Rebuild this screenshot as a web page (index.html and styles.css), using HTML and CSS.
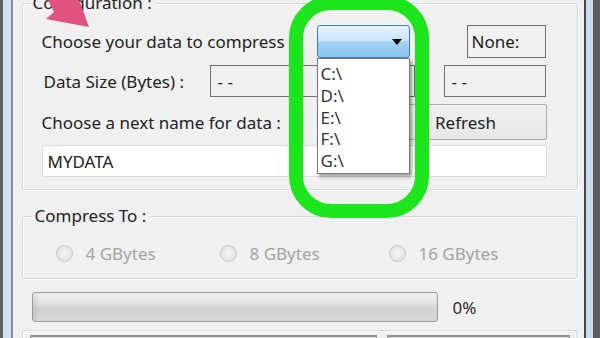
FILE: index.html
```html
<!DOCTYPE html>
<html>
<head>
<meta charset="utf-8">
<link rel="stylesheet" href="styles.css">
</head>
<body>
<div class="window">
  <div class="frame-left"></div>
  <div class="client">
    <div class="group group-config">
      <div class="legend">Configuration :</div>
      <div class="row row1">
        <div class="lbl lbl1">Choose your data to compress</div>
        <div class="combo">
          <div class="combo-btn"><span class="caret"></span></div>
          <ul class="list">
            <li>C:\</li>
            <li>D:\</li>
            <li>E:\</li>
            <li>F:\</li>
            <li>G:\</li>
          </ul>
        </div>
        <div class="box box-none">None:</div>
      </div>
      <div class="row row2">
        <div class="lbl lbl2">Data Size (Bytes) :</div>
        <div class="box box-size">- -</div>
        <div class="box box-small">- -</div>
      </div>
      <div class="row row3">
        <div class="lbl lbl3">Choose a next name for data :</div>
        <div class="button">Refresh</div>
      </div>
      <div class="row row4">
        <div class="input">MYDATA</div>
      </div>
    </div>

    <div class="group group-compress">
      <div class="legend">Compress To :</div>
      <div class="radios">
        <div class="radio"><span class="dot"></span>4 GBytes</div>
        <div class="radio"><span class="dot"></span>8 GBytes</div>
        <div class="radio"><span class="dot"></span>16 GBytes</div>
      </div>
    </div>

    <div class="progress-row">
      <div class="progress"></div>
      <div class="pct">0%</div>
    </div>

    <div class="group group-bottom">
      <div class="bbox bbox-left"></div>
      <div class="bbox bbox-right"></div>
    </div>
  </div>
  <div class="frame-right"></div>

  <div class="ring"></div>
  <svg class="arrow" width="100" height="32" viewBox="0 0 100 32">
    <polygon points="47,-2 70,-2 77,-4 80,2 89,27 46,19 54,12" fill="#e0527f"/>
  </svg>
</div>
</body>
</html>
```
FILE: styles.css
```css
* { box-sizing: border-box; }
html, body { margin: 0; padding: 0; }
body {
  width: 600px;
  height: 338px;
  overflow: hidden;
  background: #f0f0f0;
  font-family: "Noto Sans", "Open Sans", sans-serif;
  font-size: 17px;
  color: #222;
}
.window {
  position: relative;
  display: flex;
  height: 338px;
  overflow: hidden;
}
.frame-left {
  width: 13px;
  border-left: 3px solid #5f5f5f;
  border-right: 2px solid #8b8b8b;
  background: #cfe2f6;
}
.frame-right {
  width: 17px;
  border-left: 2px solid #474747;
  border-right: 7px solid #5c5c5c;
  background: #c9ddf2;
}
.client {
  flex: 1;
  position: relative;
  padding: 0 6px 0 9px;
  background: #f0f0f0;
}
.group {
  border: 1px solid #d3d8dc;
  border-radius: 3px;
  box-shadow: inset 1px 1px 0 #fff, 1px 1px 0 #fff;
}
.legend {
  display: table;
  line-height: 20px;
  padding: 0 3px;
  background: #f0f0f0;
}
.group-config {
  margin-top: 3px;
  padding: 0 30px 12px 19px;
}
.group-config .legend { margin: -11px 0 12px -12px; }

.row { display: flex; align-items: center; }
.row1 { height: 33px; }
.row2 { height: 32px; margin-top: 7px; }
.row3 { height: 36px; margin-top: 7px; }
.row4 { height: 32px; margin-top: 5px; }

.lbl { white-space: nowrap; }
.lbl1 { width: 275px; }
.lbl2 { width: 168px; padding-left: 2px; }
.lbl3 { width: 343px; }

.combo {
  position: relative;
  width: 93px;
  height: 33px;
  z-index: 5;
}
.combo-btn {
  height: 100%;
  border: 1px solid #3c7fb1;
  border-radius: 3px;
  background: linear-gradient(#e8f4fd, #c6e3f8 48%, #a4d1f3 52%, #8cc3ee);
  display: flex;
  align-items: center;
  justify-content: flex-end;
  padding-right: 7px;
}
.caret {
  width: 0;
  height: 0;
  border-left: 5px solid transparent;
  border-right: 5px solid transparent;
  border-top: 6px solid #000;
}
.list {
  position: absolute;
  top: 33px;
  left: 0;
  width: 93px;
  margin: 0;
  padding: 4px 0 1px 3px;
  list-style: none;
  background: #fff;
  border: 1px solid #7a7a7a;
  box-shadow: 2px 3px 3px rgba(0, 0, 0, 0.35);
}
.list li { line-height: 21.75px; color: #333; }

.box {
  border: 1px solid #6e6e6e;
  height: 100%;
  display: flex;
  align-items: center;
  padding-left: 4px;
}
.box-none { width: 79px; margin-left: 57px; }
.box-size { width: 205px; padding-left: 7px; }
.box-small { width: 102px; margin-left: 29px; padding-left: 7px; }

.button {
  width: 162px;
  height: 100%;
  border: 1px solid #a9a9a9;
  border-radius: 2px;
  background: linear-gradient(#f0f0f0, #e6e6e6);
  display: flex;
  align-items: center;
  justify-content: center;
}
.input {
  width: 100%;
  height: 100%;
  background: #fff;
  border: 1px solid #dadada;
  border-radius: 2px;
  display: flex;
  align-items: center;
  padding-left: 5px;
}

.group-compress {
  margin-top: 26px;
  padding: 0 0 16px 33px;
}
.group-compress .legend { margin: -11px 0 16px -24px; }
.radios {
  display: grid;
  grid-template-columns: 164px 169px auto;
  height: 20px;
  align-items: center;
}
.radio {
  display: flex;
  align-items: center;
  gap: 13px;
  color: #a3a3a3;
}
.dot {
  width: 17px;
  height: 17px;
  border-radius: 50%;
  border: 1px solid #c8c8c8;
  background: radial-gradient(circle at 50% 50%, #f6f6f6 0, #e6e6e6 55%, #dcdcdc 100%);
}

.progress-row {
  display: flex;
  align-items: center;
  margin-top: 13px;
  padding-left: 10px;
  height: 30px;
}
.progress {
  width: 406px;
  height: 30px;
  border: 1px solid #9c9c9c;
  border-radius: 3px;
  background: linear-gradient(#f3f3f3, #e2e2e2 35%, #d0d0d0 60%, #dadada);
  box-shadow: inset 3px 0 4px rgba(0, 0, 0, 0.08);
}
.pct { margin-left: 15px; color: #2a2a2a; }

.group-bottom {
  margin-top: 8px;
  padding: 4px 7px 0;
  display: flex;
  gap: 10px;
  height: 40px;
}
.bbox {
  height: 20px;
  border-top: 2px solid #8e8e8e;
  border-left: 1px solid #a0a0a0;
  border-right: 1px solid #a0a0a0;
  background: #dedede;
}
.bbox-left { width: 347px; }
.bbox-right { width: 183px; }

.ring {
  position: absolute;
  left: 289px;
  top: -4px;
  width: 140px;
  height: 222px;
  border: 14px solid #1de51d;
  border-radius: 42px;
  z-index: 10;
}
.arrow {
  position: absolute;
  left: 0;
  top: 0;
  z-index: 11;
}
```
